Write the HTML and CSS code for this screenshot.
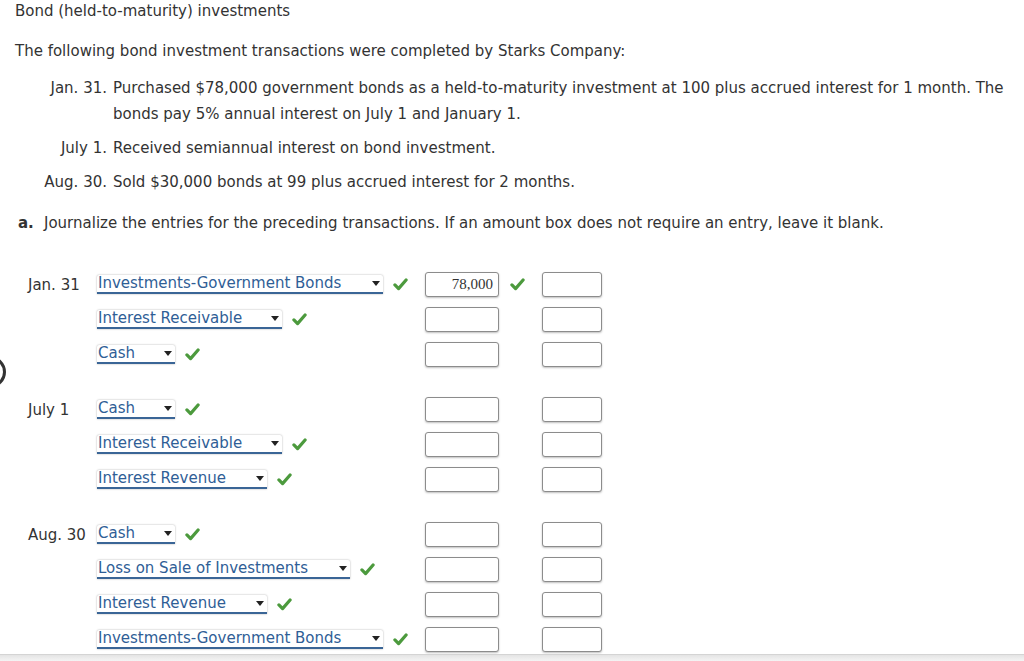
FILE: index.html
```html
<!DOCTYPE html>
<html lang="en">
<head>
<meta charset="utf-8">
<title>Bond (held-to-maturity) investments</title>
<link rel="stylesheet" href="styles.css">
</head>
<body>
<div class="page">
  <span class="edge-circle"></span>
  <h1 class="title">Bond (held-to-maturity) investments</h1>
  <p class="intro">The following bond investment transactions were completed by Starks Company:</p>
  <div class="txns">
    <div class="txn"><span class="txn-date">Jan. 31.</span><span class="txn-text">Purchased $78,000 government bonds as a held-to-maturity investment at 100 plus accrued interest for 1 month. The bonds pay 5% annual interest on July 1 and January 1.</span></div>
    <div class="txn"><span class="txn-date">July 1.</span><span class="txn-text">Received semiannual interest on bond investment.</span></div>
    <div class="txn"><span class="txn-date">Aug. 30.</span><span class="txn-text">Sold $30,000 bonds at 99 plus accrued interest for 2 months.</span></div>
  </div>
  <p class="task"><b class="task-label">a.</b>Journalize the entries for the preceding transactions. If an amount box does not require an entry, leave it blank.</p>

  <div class="journal">
    <div class="entry">
      <div class="row">
        <span class="jdate">Jan. 31</span>
        <span class="acct"><span class="dd w-igb">Investments-Government Bonds<i class="caret"></i></span><svg class="check" viewBox="0 0 14 12"><path d="M1.8 6.4 L5.2 9.8 L12.2 1.8"/></svg></span>
        <span class="amt">78,000</span>
        <span class="mark"><svg class="check" viewBox="0 0 14 12"><path d="M1.8 6.4 L5.2 9.8 L12.2 1.8"/></svg></span>
        <span class="amt amt-cr"></span>
      </div>
      <div class="row">
        <span class="jdate"></span>
        <span class="acct"><span class="dd w-ir">Interest Receivable<i class="caret"></i></span><svg class="check" viewBox="0 0 14 12"><path d="M1.8 6.4 L5.2 9.8 L12.2 1.8"/></svg></span>
        <span class="amt"></span>
        <span class="mark"></span>
        <span class="amt amt-cr"></span>
      </div>
      <div class="row">
        <span class="jdate"></span>
        <span class="acct"><span class="dd w-cash">Cash<i class="caret"></i></span><svg class="check" viewBox="0 0 14 12"><path d="M1.8 6.4 L5.2 9.8 L12.2 1.8"/></svg></span>
        <span class="amt"></span>
        <span class="mark"></span>
        <span class="amt amt-cr"></span>
      </div>
    </div>

    <div class="entry">
      <div class="row">
        <span class="jdate">July 1</span>
        <span class="acct"><span class="dd w-cash">Cash<i class="caret"></i></span><svg class="check" viewBox="0 0 14 12"><path d="M1.8 6.4 L5.2 9.8 L12.2 1.8"/></svg></span>
        <span class="amt"></span>
        <span class="mark"></span>
        <span class="amt amt-cr"></span>
      </div>
      <div class="row">
        <span class="jdate"></span>
        <span class="acct"><span class="dd w-ir">Interest Receivable<i class="caret"></i></span><svg class="check" viewBox="0 0 14 12"><path d="M1.8 6.4 L5.2 9.8 L12.2 1.8"/></svg></span>
        <span class="amt"></span>
        <span class="mark"></span>
        <span class="amt amt-cr"></span>
      </div>
      <div class="row">
        <span class="jdate"></span>
        <span class="acct"><span class="dd w-rev">Interest Revenue<i class="caret"></i></span><svg class="check" viewBox="0 0 14 12"><path d="M1.8 6.4 L5.2 9.8 L12.2 1.8"/></svg></span>
        <span class="amt"></span>
        <span class="mark"></span>
        <span class="amt amt-cr"></span>
      </div>
    </div>

    <div class="entry">
      <div class="row">
        <span class="jdate">Aug. 30</span>
        <span class="acct"><span class="dd w-cash">Cash<i class="caret"></i></span><svg class="check" viewBox="0 0 14 12"><path d="M1.8 6.4 L5.2 9.8 L12.2 1.8"/></svg></span>
        <span class="amt"></span>
        <span class="mark"></span>
        <span class="amt amt-cr"></span>
      </div>
      <div class="row">
        <span class="jdate"></span>
        <span class="acct"><span class="dd w-loss">Loss on Sale of Investments<i class="caret"></i></span><svg class="check" viewBox="0 0 14 12"><path d="M1.8 6.4 L5.2 9.8 L12.2 1.8"/></svg></span>
        <span class="amt"></span>
        <span class="mark"></span>
        <span class="amt amt-cr"></span>
      </div>
      <div class="row">
        <span class="jdate"></span>
        <span class="acct"><span class="dd w-rev">Interest Revenue<i class="caret"></i></span><svg class="check" viewBox="0 0 14 12"><path d="M1.8 6.4 L5.2 9.8 L12.2 1.8"/></svg></span>
        <span class="amt"></span>
        <span class="mark"></span>
        <span class="amt amt-cr"></span>
      </div>
      <div class="row">
        <span class="jdate"></span>
        <span class="acct"><span class="dd w-igb">Investments-Government Bonds<i class="caret"></i></span><svg class="check" viewBox="0 0 14 12"><path d="M1.8 6.4 L5.2 9.8 L12.2 1.8"/></svg></span>
        <span class="amt"></span>
        <span class="mark"></span>
        <span class="amt amt-cr"></span>
      </div>
    </div>
  </div>
  <div class="footer-shade"></div>
</div>
</body>
</html>
```

FILE: styles.css
```css
html, body {
  margin: 0;
  padding: 0;
  background: #fff;
}
body {
  font-family: "DejaVu Sans", Verdana, sans-serif;
  font-size: 15px;
  color: #333;
  overflow: hidden;
}
.page {
  position: relative;
  width: 1024px;
  height: 661px;
  overflow: hidden;
}
.edge-circle {
  position: absolute;
  left: -26px;
  top: 356px;
  width: 26px;
  height: 26px;
  border: 3px solid #333;
  border-radius: 50%;
}
.title {
  margin: 0;
  padding: 1px 0 0 15px;
  font-size: 15px;
  font-weight: normal;
  line-height: 20px;
}
.intro {
  margin: 20px 0 0 0;
  padding-left: 15px;
  line-height: 20px;
}
.txns {
  margin-top: 14px;
  display: flex;
  flex-direction: column;
  gap: 8px;
}
.txn {
  display: grid;
  grid-template-columns: 107px 906px;
  column-gap: 6px;
  line-height: 26px;
}
.txn-date {
  text-align: right;
}
.task {
  margin: 18px 0 0 0;
  padding-left: 18px;
  line-height: 20px;
}
.task-label {
  display: inline-block;
  width: 26px;
}
.journal {
  margin-top: 39px;
  padding-left: 28px;
  display: flex;
  flex-direction: column;
  gap: 30px;
}
.entry {
  display: flex;
  flex-direction: column;
  gap: 10px;
}
.row {
  display: grid;
  grid-template-columns: 69px 328px 74px 43px 60px;
  height: 25px;
  align-items: center;
}
.jdate {
  white-space: nowrap;
}
.acct {
  display: flex;
  align-items: center;
  gap: 10px;
}
.dd {
  position: relative;
  box-sizing: border-box;
  height: 19px;
  padding: 0 0 0 1px;
  line-height: 17px;
  color: #2f5e96;
  background: #fff;
  border-bottom: 2px solid #3a6596;
  border-radius: 2px 2px 0 0;
  box-shadow: 0 0 2px rgba(0, 0, 0, 0.35);
  white-space: nowrap;
}
.caret {
  position: absolute;
  right: 3px;
  top: 6px;
  width: 0;
  height: 0;
  border-left: 4px solid transparent;
  border-right: 4px solid transparent;
  border-top: 5px solid #222;
}
.w-igb { width: 286px; }
.w-ir { width: 185px; }
.w-cash { width: 78px; }
.w-rev { width: 170px; }
.w-loss { width: 253px; }
.check {
  width: 15px;
  height: 13px;
  flex: none;
}
.check path {
  fill: none;
  stroke: #4c9a3d;
  stroke-width: 3;
  stroke-linecap: round;
  stroke-linejoin: round;
}
.mark {
  display: flex;
  align-items: center;
  padding-left: 11px;
}
.amt {
  box-sizing: border-box;
  height: 25px;
  width: 74px;
  border: 1px solid #8c8c8c;
  border-radius: 3px;
  box-shadow: 0 1px 2px rgba(0, 0, 0, 0.25);
  background: #fff;
  font-family: "Liberation Serif", "Times New Roman", serif;
  font-size: 15px;
  color: #333;
  text-align: right;
  padding: 0 5px;
  line-height: 23px;
}
.amt-cr {
  width: 60px;
}
.footer-shade {
  position: absolute;
  left: 0;
  right: 0;
  bottom: 0;
  height: 6px;
  border-top: 1px solid #d4d4d4;
  background: linear-gradient(#e4e4e4, #f4f4f4);
}
```
